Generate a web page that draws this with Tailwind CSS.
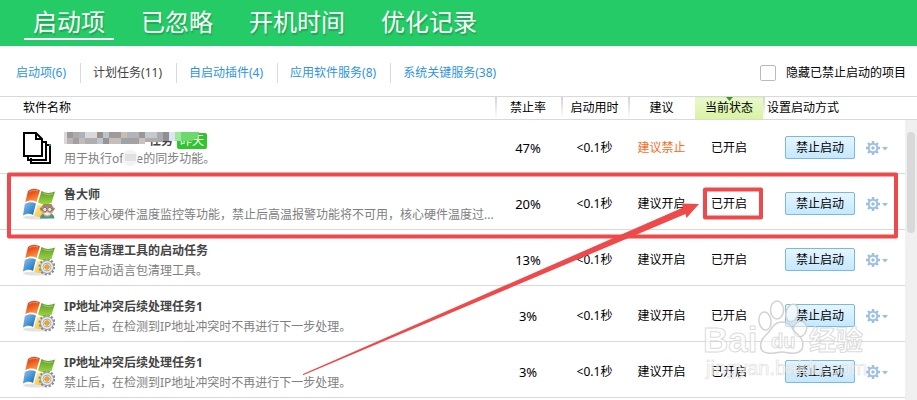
<!DOCTYPE html>
<html lang="zh-CN">
<head>
<meta charset="utf-8">
<meta name="viewport" content="width=device-width, initial-scale=1">
<title>启动项</title>
<script src="https://cdn.jsdelivr.net/npm/@tailwindcss/browser@4"></script>
</head>
<body class="relative min-h-screen overflow-hidden bg-white font-['Noto_Sans','Noto_Sans_CJK_SC',sans-serif] text-[12px] leading-4 text-black">

<svg class="absolute size-0" aria-hidden="true">
  <defs>
    <linearGradient id="red" x1="0" y1="0" x2="0.4" y2="1"><stop offset="0" stop-color="#c93a16"/><stop offset=".5" stop-color="#ee5a1c"/><stop offset="1" stop-color="#f79a4c"/></linearGradient>
    <linearGradient id="green" x1="0" y1="0" x2="0" y2="1"><stop offset="0" stop-color="#5d9b2e"/><stop offset="1" stop-color="#9fd83a"/></linearGradient>
    <linearGradient id="blue" x1="0" y1="0" x2="1" y2="1"><stop offset="0" stop-color="#8fc4ea"/><stop offset=".6" stop-color="#3f8fd0"/><stop offset="1" stop-color="#1d5aa6"/></linearGradient>
    <linearGradient id="yellow" x1="0" y1="0" x2="1" y2="1"><stop offset="0" stop-color="#fff0a0"/><stop offset="1" stop-color="#f3b21b"/></linearGradient>
  </defs>
  <symbol id="flag" viewBox="0 0 32 32">
    <ellipse cx="13" cy="29.500" rx="13" ry="2" fill="#e3e3e3"/>
    <path d="M5 3C9 0 13 .2 17 2.200L13.500 14C10 12 6 12 2.200 14.500Z" fill="url(#red)"/>
    <path d="M18.500 3C23 5.500 27 5.500 32 3.500L28.500 15C24 17 19.500 17 15 14.500Z" fill="url(#green)"/>
    <path d="M1.800 16C6 13.500 9.500 13.800 13 15.500L10 27C7 25 3.500 25.200 0 27.500Z" fill="url(#blue)"/>
    <path d="M14.500 16.300C19 18.500 23 18.500 28 16.800L25 28C20 29.500 15.500 29.500 11 27.500Z" fill="url(#yellow)"/>
    <path d="M6 4C9 2 12 2 15 3M19.500 5C24 7 27 7 30 5.500" fill="none" stroke="#fff" stroke-opacity=".35"/>
  </symbol>
  <symbol id="task" viewBox="0 0 32 32">
    <use href="#flag"/>
    <circle cx="24" cy="23" r="7.500" fill="none" stroke="#8b8f94" stroke-width="2" stroke-dasharray="2.300 1.630"/>
    <circle cx="24" cy="23" r="5.200" fill="#f3f4f5" stroke="#8b8f94" stroke-width="3.200"/>
    <circle cx="24" cy="23" r="5.200" fill="none" stroke="#e9ebed" stroke-width="1.800"/>
    <circle cx="24" cy="23" r="2.400" fill="#f5a81c" stroke="#b98a35" stroke-width=".6"/>
  </symbol>
  <symbol id="master" viewBox="0 0 32 32">
    <use href="#flag"/>
    <path d="M17 30.500C17.500 26.500 20 25 24 25S31 26 31.500 30.500Z" fill="#3f9a8c"/>
    <path d="M19.500 17H29L30 24L26.500 28.500H22L18.500 24Z" fill="#d3a582"/>
    <path d="M18.500 19L20.500 16H28.500L30 19L28 19.500H20.500Z" fill="#a58672"/>
    <path d="M16.500 20L19.500 19V23L17.500 22.500ZM29 19L32 20L31 22.500L29 23Z" fill="#b07b58"/>
    <circle cx="21.800" cy="21.500" r="2.100" fill="#dfe6e8" stroke="#6f655f" stroke-width=".8"/>
    <circle cx="26.700" cy="21.500" r="2.100" fill="#dfe6e8" stroke="#6f655f" stroke-width=".8"/>
    <path d="M20.500 26L24.200 24L28 26L24.200 27.500Z" fill="#f6eee6"/>
  </symbol>
  <symbol id="pages" viewBox="0 0 28 32">
    <path d="M8 26V31H27V13H22M5 23V28H23V10H18" fill="#fff" stroke="#000" stroke-width="2"/>
    <path d="M1 1H13L19 7V24H1Z" fill="#fff" stroke="#000" stroke-width="2"/>
    <path d="M13 1V7H19" fill="none" stroke="#000" stroke-width="2"/>
    <path d="M26 12h2v2h-2z" fill="#178080"/>
  </symbol>
  <symbol id="gear" viewBox="0 0 22 14">
    <path d="M7 0V14M0 7H14M2 2L12 12M12 2L2 12" stroke="#9dbfe2" stroke-width="2.400"/>
    <circle cx="7" cy="7" r="4.300" fill="#fff" stroke="#9dbfe2" stroke-width="2"/>
    <circle cx="7" cy="7" r="1.800" fill="#9dbfe2"/>
    <path d="M16 6H22L19 9.500Z" fill="#9dbfe2"/>
  </symbol>
</svg>

<header class="bg-[#25cb66]">
  <nav class="flex h-[46px] gap-[18px] pl-6 pt-2 text-[24px] leading-7 text-white [text-shadow:1px_2px_1px_rgba(0,90,40,0.3)]">
    <a href="#" class="h-8 border-b-2 border-white px-[9px]">启动项</a>
    <a href="#" class="h-8 px-[9px]">已忽略</a>
    <a href="#" class="h-8 px-[9px]">开机时间</a>
    <a href="#" class="h-8 px-[9px]">优化记录</a>
  </nav>
</header>

<div class="flex h-[50px] items-center justify-between pl-4 pr-[11px] pt-1">
  <nav class="flex divide-x divide-[#d9d9d9] leading-5 text-[#2e93e5]">
    <a href="#" class="pr-[14px]">启动项(6)</a>
    <a href="#" class="pl-3 pr-[14px] text-[#444]">计划任务(11)</a>
    <a href="#" class="pl-3 pr-[14px]">自启动插件(4)</a>
    <a href="#" class="pl-3 pr-[14px]">应用软件服务(8)</a>
    <a href="#" class="pl-3">系统关键服务(38)</a>
  </nav>
  <label class="flex items-center gap-[10px]">
    <input type="checkbox" class="size-4 appearance-none rounded-xs border border-[#bbb] bg-white">
    隐藏已禁止启动的项目
  </label>
</div>

<main class="relative">
  <table class="w-full table-fixed border-collapse text-center">
    <colgroup>
      <col>
      <col class="w-[66px]"><col class="w-[67px]"><col class="w-[67px]"><col class="w-[68px]"><col class="w-[154px]">
    </colgroup>
    <thead>
      <tr class="h-[23px] border-y border-[#d9d9d9] *:font-normal">
        <th class="pl-[23px] text-left">软件名称</th>
        <th class="bg-linear-to-b from-[#d4d4d4] to-white bg-[length:2px_100%] bg-no-repeat">禁止率</th>
        <th class="bg-linear-to-b from-[#d4d4d4] to-white bg-[length:2px_100%] bg-no-repeat">启动用时</th>
        <th class="bg-linear-to-b from-[#d4d4d4] to-white bg-[length:2px_100%] bg-no-repeat">建议</th>
        <th class="relative bg-linear-to-b from-[#e9f8cc] to-[#d9f3a0]">
          <svg class="absolute left-[31px] top-0 h-1 w-[7px]" viewBox="0 0 7 4"><path d="M0 0H7L3.500 4Z" fill="#3f8f1e"/></svg>
          当前状态</th>
        <th class="bg-linear-to-b from-[#d4d4d4] to-white bg-[length:2px_100%] bg-no-repeat pl-1 text-left">设置启动方式</th>
      </tr>
    </thead>
    <tbody class="[&_tr]:border-b [&_tr]:border-[#d9d9d9] [&_button]:cursor-pointer">
      <tr class="h-[54px] *:pt-[2px]">
        <td class="text-left">
          <div class="flex items-center gap-[13px] pl-[23px]">
            <svg class="h-8 w-7 shrink-0"><use href="#pages"/></svg>
            <div class="relative min-w-0 pt-1 leading-[18px]">
              <p class="flex items-center gap-1 font-bold text-[#444]"><span class="w-[109px] text-right">任务</span><span class="rounded-xs bg-[#2fc52f] px-[3px] leading-4 font-normal text-white">昨天</span></p>
              <p class="whitespace-nowrap text-[#808080]">用于执行office的同步功能。</p>
              <svg class="absolute left-0 top-0 h-10 w-[145px]" viewBox="0 0 145 40" aria-hidden="true">
                <g shape-rendering="crispEdges">
                  <path d="M0 4H6V16H0Z" fill="#ddd6d2"/><path d="M3 4H9V10H3Z" fill="#9b9b9d"/><path d="M3 10H9V16H3Z" fill="#bcb5b3"/>
                  <path d="M9 4H15V10H9Z" fill="#b3aaa4"/><path d="M9 10H15V16H9Z" fill="#a0a0a4"/>
                  <path d="M15 4H21V10H15Z" fill="#a9b3bf"/><path d="M15 10H21V16H15Z" fill="#c3bbb5"/>
                  <path d="M21 4H33V10H21Z" fill="#d9d9dc"/><path d="M21 10H33V16H21Z" fill="#b1adb0"/>
                  <path d="M33 4H39V10H33Z" fill="#9b8f8d"/><path d="M33 10H39V16H33Z" fill="#c0c6cc"/>
                  <path d="M39 4H45V10H39Z" fill="#b9c4cc"/><path d="M39 10H45V16H39Z" fill="#959598"/>
                  <path d="M45 4H57V10H45Z" fill="#a09a9c"/><path d="M45 10H57V16H45Z" fill="#c6bfb9"/>
                  <path d="M57 4H63V10H57Z" fill="#c9bcb1"/><path d="M57 10H63V16H57Z" fill="#9da3ac"/>
                  <path d="M63 4H75V10H63Z" fill="#b0b5bb"/><path d="M63 10H75V16H63Z" fill="#a5a0a1"/>
                  <path d="M75 4H81V10H75Z" fill="#9d9696"/><path d="M75 10H81V16H75Z" fill="#c8c3c0"/>
                  <path d="M81 4H93V10H81Z" fill="#c3c9cf"/><path d="M81 10H93V14H81Z" fill="#b5aca8"/>
                  <path d="M93 4H99V14H93Z" fill="#aaa9ad"/><path d="M99 4H105V13H99Z" fill="#8f8f93"/>
                  <path d="M105 4H111V13H105Z" fill="#dfe5ee"/><path d="M111 4H117V13H111Z" fill="#9be89b"/>
                </g>
                <path d="M117 4H135Q135 10 128 13H117Z" fill="#6ed86c"/>
                <circle cx="66" cy="30" r="8" fill="#f2f3f4"/>
                <path d="M61 26H72V33H61Z" fill="#e2e0e1"/>
              </svg>
            </div>
          </div>
        </td>
        <td class="text-[13px]">47%</td><td>&lt;0.1秒</td><td class="text-[#ff6a1a]">建议禁止</td><td>已开启</td>
        <td><div class="flex items-center gap-[11px] pl-[22px]"><button class="h-[23px] w-[70px] rounded-xs border border-[#7ab8dc] bg-linear-to-b from-[#e4f5ff] to-[#c5e8ff]">禁止启动</button><button aria-label="设置"><svg class="h-[14px] w-[22px]"><use href="#gear"/></svg></button></div></td>
      </tr>
      <tr class="h-14 *:pt-1">
        <td class="text-left">
          <div class="flex items-center gap-[9px] pl-[23px]">
            <svg class="size-8 shrink-0"><use href="#master"/></svg>
            <div class="min-w-0 pt-[2px] leading-5"><p class="font-bold text-[#444]">鲁大师</p><p class="whitespace-nowrap text-[#808080]">用于核心硬件温度监控等功能，禁止后高温报警功能将不可用，核心硬件温度过...</p></div>
          </div>
        </td>
        <td class="text-[13px]">20%</td><td>&lt;0.1秒</td><td>建议开启</td><td>已开启</td>
        <td><div class="flex items-center gap-[11px] pl-[22px]"><button class="h-[23px] w-[70px] rounded-xs border border-[#7ab8dc] bg-linear-to-b from-[#e4f5ff] to-[#c5e8ff]">禁止启动</button><button aria-label="设置"><svg class="h-[14px] w-[22px]"><use href="#gear"/></svg></button></div></td>
      </tr>
      <tr class="h-14 *:pt-1">
        <td class="text-left">
          <div class="flex items-center gap-[9px] pl-[23px]">
            <svg class="size-8 shrink-0"><use href="#task"/></svg>
            <div class="min-w-0 pt-[2px] leading-5"><p class="font-bold text-[#444]">语言包清理工具的启动任务</p><p class="whitespace-nowrap text-[#808080]">用于启动语言包清理工具。</p></div>
          </div>
        </td>
        <td class="text-[13px]">13%</td><td>&lt;0.1秒</td><td>建议开启</td><td>已开启</td>
        <td><div class="flex items-center gap-[11px] pl-[22px]"><button class="h-[23px] w-[70px] rounded-xs border border-[#7ab8dc] bg-linear-to-b from-[#e4f5ff] to-[#c5e8ff]">禁止启动</button><button aria-label="设置"><svg class="h-[14px] w-[22px]"><use href="#gear"/></svg></button></div></td>
      </tr>
      <tr class="h-14 *:pt-1">
        <td class="text-left">
          <div class="flex items-center gap-[9px] pl-[23px]">
            <svg class="size-8 shrink-0"><use href="#task"/></svg>
            <div class="min-w-0 pt-[2px] leading-5"><p class="font-bold text-[#444]">IP地址冲突后续处理任务1</p><p class="whitespace-nowrap text-[#808080]">禁止后，在检测到IP地址冲突时不再进行下一步处理。</p></div>
          </div>
        </td>
        <td class="text-[13px]">3%</td><td>&lt;0.1秒</td><td>建议开启</td><td>已开启</td>
        <td><div class="flex items-center gap-[11px] pl-[22px]"><button class="h-[23px] w-[70px] rounded-xs border border-[#7ab8dc] bg-linear-to-b from-[#e4f5ff] to-[#c5e8ff]">禁止启动</button><button aria-label="设置"><svg class="h-[14px] w-[22px]"><use href="#gear"/></svg></button></div></td>
      </tr>
      <tr class="h-14 *:pt-1">
        <td class="text-left">
          <div class="flex items-center gap-[9px] pl-[23px]">
            <svg class="size-8 shrink-0"><use href="#task"/></svg>
            <div class="min-w-0 pt-[2px] leading-5"><p class="font-bold text-[#444]">IP地址冲突后续处理任务1</p><p class="whitespace-nowrap text-[#808080]">禁止后，在检测到IP地址冲突时不再进行下一步处理。</p></div>
          </div>
        </td>
        <td class="text-[13px]">3%</td><td>&lt;0.1秒</td><td>建议开启</td><td>已开启</td>
        <td><div class="flex items-center gap-[11px] pl-[22px]"><button class="h-[23px] w-[70px] rounded-xs border border-[#7ab8dc] bg-linear-to-b from-[#e4f5ff] to-[#c5e8ff]">禁止启动</button><button aria-label="设置"><svg class="h-[14px] w-[22px]"><use href="#gear"/></svg></button></div></td>
      </tr>
    </tbody>
  </table>

  <!-- Scrollbar -->
  <div class="absolute -bottom-4 right-0 top-6 w-3 bg-[#f0f0f0] px-[2px] pt-3">
    <div class="h-[101px] rounded-full bg-[#d9d9d9]"></div>
  </div>
</main>

<!-- Watermark -->
<svg class="pointer-events-none absolute right-[47px] top-[298px] h-[86px] w-[170px]" viewBox="0 0 170 86" aria-hidden="true">
  <g fill="#fff" fill-opacity=".55" stroke="#d2d2d2" stroke-width="1.500">
    <ellipse cx="65" cy="23" rx="6" ry="9" transform="rotate(-8 65 23)"/>
    <ellipse cx="77" cy="12" rx="6.500" ry="9"/>
    <ellipse cx="92" cy="15" rx="6" ry="9" transform="rotate(15 92 15)"/>
    <ellipse cx="100" cy="31" rx="6.500" ry="8" transform="rotate(20 100 31)"/>
    <path d="M82 24C91 24 92 32 98 37C104 42 106 54 95 55C89 56 88 54 82 54S74 56 68 55C57 54 60 42 66 37C72 32 73 24 82 24Z"/>
  </g>
  <g fill="#fff" fill-opacity=".6" stroke="#d2d2d2" stroke-opacity=".8" font-family="'Liberation Sans','Noto Sans CJK SC',sans-serif" font-weight="700">
    <text x="3" y="54" font-size="35">Bai</text>
    <text x="71" y="50" font-size="20">du</text>
    <text x="109" y="52" font-size="27">经验</text>
    <text x="6" y="77" font-size="20" font-weight="400" stroke-width=".6">jingyan.baidu.com</text>
  </g>
</svg>

<!-- Callouts -->
<svg class="pointer-events-none absolute left-0 top-0 h-[400px] w-[917px]" viewBox="0 0 917 400" aria-hidden="true">
  <g fill="none" stroke="#ee4a4c" stroke-width="4" stroke-linejoin="round">
    <rect x="9" y="174.500" width="887" height="62"/>
    <rect x="705" y="189.500" width="56" height="28"/>
  </g>
  <path d="M303 374L683 207.500L681.500 203.500L699 204L686.500 218L685.500 214L303 375.200Z" fill="#ee4a4c"/>
</svg>
</body>
</html>
